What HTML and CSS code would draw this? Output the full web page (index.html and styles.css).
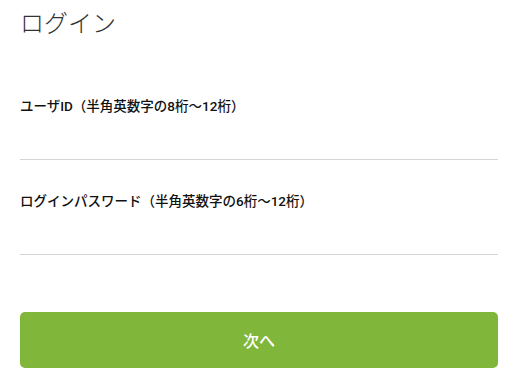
FILE: index.html
```html
<!DOCTYPE html>
<html lang="ja">
<head>
    <meta charset="UTF-8">
    <title>ログイン</title>
    <link rel="stylesheet" href="styles.css">
</head>
<body>
    <div class="login">
        <h1 class="login-title">ログイン</h1>

        <form class="login-form">
            <!-- ユーザID -->
            <div class="field">
                <label class="field-label" for="userId">ユーザID（半角英数字の8桁〜12桁）</label>
                <input class="field-input" id="userId" type="text">
            </div>

            <!-- パスワード -->
            <div class="field">
                <label class="field-label" for="password">ログインパスワード（半角英数字の6桁〜12桁）</label>
                <input class="field-input" id="password" type="password">
            </div>

            <button class="next-button" type="button">次へ</button>
        </form>
    </div>
</body>
</html>
```

FILE: styles.css
```css
body {
    margin: 0;
    background: #fff;
    font-family: Roboto, "Noto Sans CJK JP", sans-serif;
    color: #222;
}

.login {
    padding: 0 17px 0 20px;
}

.login-title {
    margin: 0;
    padding-top: 6px;
    font-size: 24px;
    font-weight: 300;
    line-height: 36px;
    color: #333;
}

.login-form {
    display: flex;
    flex-direction: column;
    margin-top: 54px;
}

.field {
    display: flex;
    flex-direction: column;
    margin-bottom: 31px;
}

.field-label {
    font-size: 13.5px;
    font-weight: 500;
    line-height: 20px;
    color: #111;
}

.field-input {
    height: 43px;
    margin: 0;
    padding: 0;
    border: none;
    border-bottom: 1px solid #d4d4d4;
    outline: none;
    background: transparent;
    font-size: 16px;
}

/* 次へボタン */
.next-button {
    height: 56px;
    margin-top: 26px;
    border: none;
    border-radius: 5px;
    background: #80b73b;
    color: #fff;
    font-family: inherit;
    font-size: 16px;
    font-weight: 500;
}
```
